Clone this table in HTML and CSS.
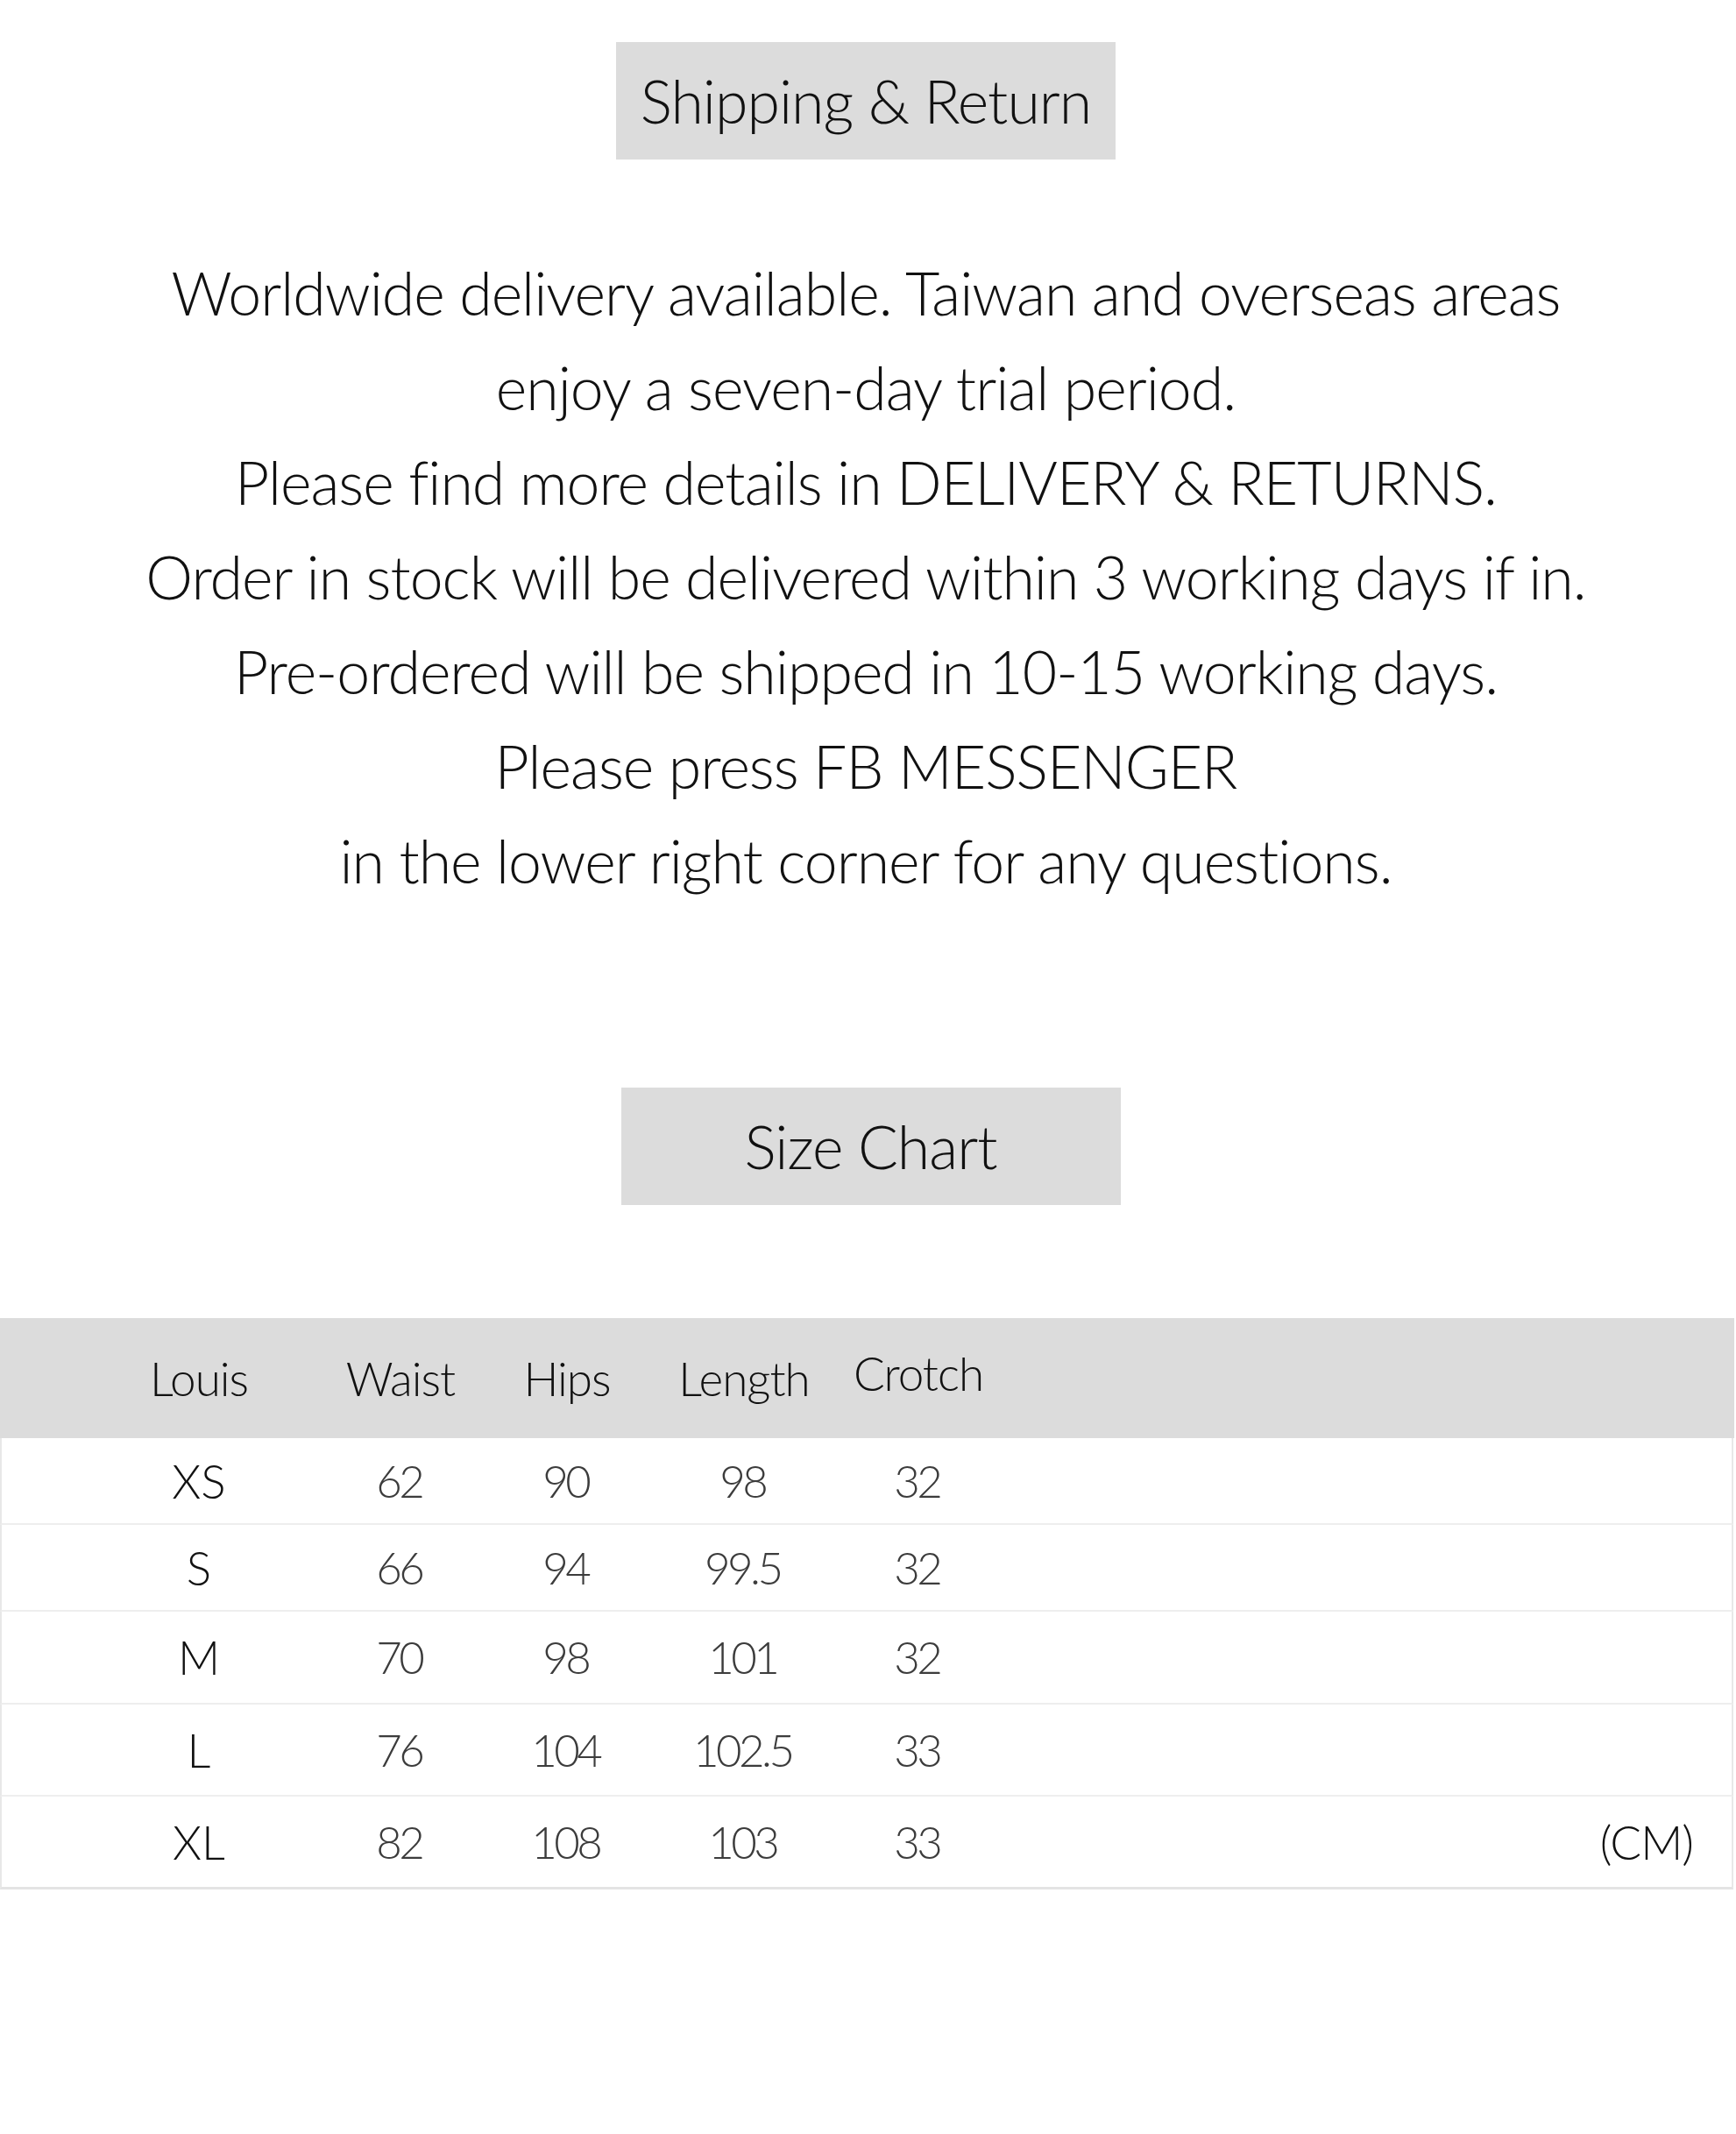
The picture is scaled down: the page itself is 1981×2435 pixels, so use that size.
FILE: index.html
```html
<!DOCTYPE html>
<html lang="en">
<head>
<meta charset="utf-8">
<title>Shipping &amp; Return / Size Chart</title>
<link rel="stylesheet" href="styles.css">
</head>
<body>
<main class="page">
  <section class="block block--shipping">
    <div class="tag">Shipping &amp; Return</div>
    <p class="notes">
      Worldwide delivery available. Taiwan and overseas areas<br>
      enjoy a seven-day trial period.<br>
      Please find more details in DELIVERY &amp; RETURNS.<br>
      Order in stock will be delivered within 3 working days if in.<br>
      Pre-ordered will be shipped in 10-15 working days.<br>
      Please press FB MESSENGER<br>
      in the lower right corner for any questions.
    </p>
  </section>

  <section class="block block--size">
    <div class="tag tag--size">Size Chart</div>
  </section>

  <div class="chart">
    <div class="chart__row chart__row--head">
      <div class="cell">Louis</div>
      <div class="cell">Waist</div>
      <div class="cell">Hips</div>
      <div class="cell">Length</div>
      <div class="cell cell--raised">Crotch</div>
      <div class="cell cell--unit"></div>
    </div>
    <div class="chart__row">
      <div class="cell cell--size">XS</div>
      <div class="cell cell--num">62</div>
      <div class="cell cell--num">90</div>
      <div class="cell cell--num">98</div>
      <div class="cell cell--num">32</div>
      <div class="cell cell--unit"></div>
    </div>
    <div class="chart__row">
      <div class="cell cell--size">S</div>
      <div class="cell cell--num">66</div>
      <div class="cell cell--num">94</div>
      <div class="cell cell--num">99.5</div>
      <div class="cell cell--num">32</div>
      <div class="cell cell--unit"></div>
    </div>
    <div class="chart__row chart__row--tall">
      <div class="cell cell--size">M</div>
      <div class="cell cell--num">70</div>
      <div class="cell cell--num">98</div>
      <div class="cell cell--num">101</div>
      <div class="cell cell--num">32</div>
      <div class="cell cell--unit"></div>
    </div>
    <div class="chart__row chart__row--tall">
      <div class="cell cell--size">L</div>
      <div class="cell cell--num">76</div>
      <div class="cell cell--num">104</div>
      <div class="cell cell--num">102.5</div>
      <div class="cell cell--num">33</div>
      <div class="cell cell--unit"></div>
    </div>
    <div class="chart__row chart__row--tall chart__row--last">
      <div class="cell cell--size">XL</div>
      <div class="cell cell--num">82</div>
      <div class="cell cell--num">108</div>
      <div class="cell cell--num">103</div>
      <div class="cell cell--num">33</div>
      <div class="cell cell--unit">(CM)</div>
    </div>
  </div>
</main>
</body>
</html>
```

FILE: styles.css
```css
html, body {
  margin: 0;
  padding: 0;
  background: #ffffff;
}

body {
  font-family: "Lato", "Open Sans", "Liberation Sans", sans-serif;
  font-weight: 300;
  color: #111111;
  min-height: 2435px;
}

.page {
  width: 1976px;
  padding-top: 48px;
}

.block {
  display: flex;
  flex-direction: column;
  align-items: center;
}

.tag {
  width: 570px;
  height: 134px;
  background: #dcdcdc;
  display: flex;
  align-items: center;
  justify-content: center;
  font-size: 68px;
  letter-spacing: -1px;
  line-height: 1;
  color: #111111;
}

.tag--size {
  margin-left: 11px;
}

.notes {
  margin: 98px 0 0;
  text-align: center;
  font-size: 68px;
  letter-spacing: -1px;
  line-height: 108px;
  color: #111111;
}

.block--size {
  margin-top: 205px;
}

.chart {
  margin-top: 129px;
  width: 1978px;
}

.chart__row {
  display: grid;
  grid-template-columns: 300px 160px 220px 184px 214px 1fr;
  padding: 0 44px 0 75px;
  height: 99px;
  box-sizing: border-box;
  align-items: center;
  border-left: 2px solid #e8e8e8;
  border-right: 2px solid #e8e8e8;
  border-bottom: 2px solid #eeeeee;
  font-size: 53px;
}

.chart__row--head {
  height: 137px;
  width: 1979px;
  background: #dcdcdc;
  border: none;
  padding-left: 77px;
  padding-top: 0;
  letter-spacing: -1px;
}

.chart__row--tall {
  height: 105.5px;
}

.chart__row--last {
  border-bottom: 3px solid #e4e4e4;
}

.cell {
  text-align: center;
  line-height: 1;
}

.cell--raised {
  padding-bottom: 12px;
}

.cell--size {
  color: #111111;
}

.cell--num {
  color: #3c3c3c;
  font-size: 51px;
  letter-spacing: -3.5px;
  text-indent: -3.5px;
}

.cell--unit {
  text-align: right;
  color: #111111;
  letter-spacing: -1px;
}
```
